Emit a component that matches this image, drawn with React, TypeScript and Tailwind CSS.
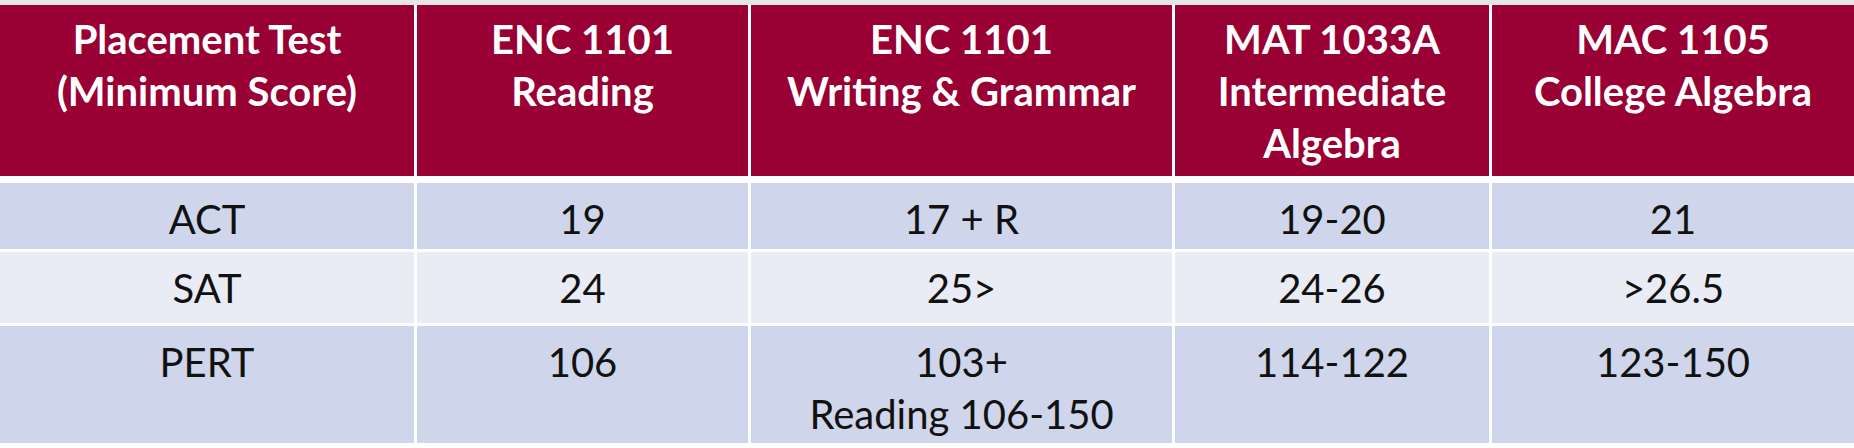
import React from "react"

const headers = [
  ["Placement Test", "(Minimum Score)"],
  ["ENC 1101", "Reading"],
  ["ENC 1101", "Writing & Grammar"],
  ["MAT 1033A", "Intermediate", "Algebra"],
  ["MAC 1105", "College Algebra"],
]

const rows = [
  { h: "h-[66px]", bg: "bg-[#cfd5ea]", cells: [["ACT"], ["19"], ["17 + R"], ["19-20"], ["21"]] },
  { h: "h-[71px]", bg: "bg-[#e9ebf5]", cells: [["SAT"], ["24"], ["25>"], ["24-26"], [">26.5"]] },
  { h: "h-[117px]", bg: "bg-[#cfd5ea]", cells: [["PERT"], ["106"], ["103+", "Reading 106-150"], ["114-122"], ["123-150"]] },
]

export default function App() {
  return (
    <div className="w-[1854px] h-[448px] bg-white font-['Lato',sans-serif] overflow-hidden">
      <div className="h-[5px] bg-[#e6e6e6]" />
      <div className="grid grid-cols-[414px_331px_421px_314px_362px] gap-x-[3px]">
        {headers.map((lines, i) => (
          <div key={i} className="h-[171px] bg-[#990033] text-white font-bold text-[40px] leading-[52px] text-center pt-[8px]">
            {lines.map((l) => (
              <div key={l}>{l}</div>
            ))}
          </div>
        ))}
      </div>
      <div className="h-[7px]" />
      <div className="flex flex-col gap-y-[3px]">
        {rows.map((row, r) => (
          <div key={r} className="grid grid-cols-[414px_331px_421px_314px_362px] gap-x-[3px]">
            {row.cells.map((lines, i) => (
              <div key={i} className={`${row.h} ${row.bg} text-[#111] text-[40px] leading-[52px] text-center pt-[10px]`}>
                {lines.map((l) => (
                  <div key={l}>{l}</div>
                ))}
              </div>
            ))}
          </div>
        ))}
      </div>
    </div>
  )
}
